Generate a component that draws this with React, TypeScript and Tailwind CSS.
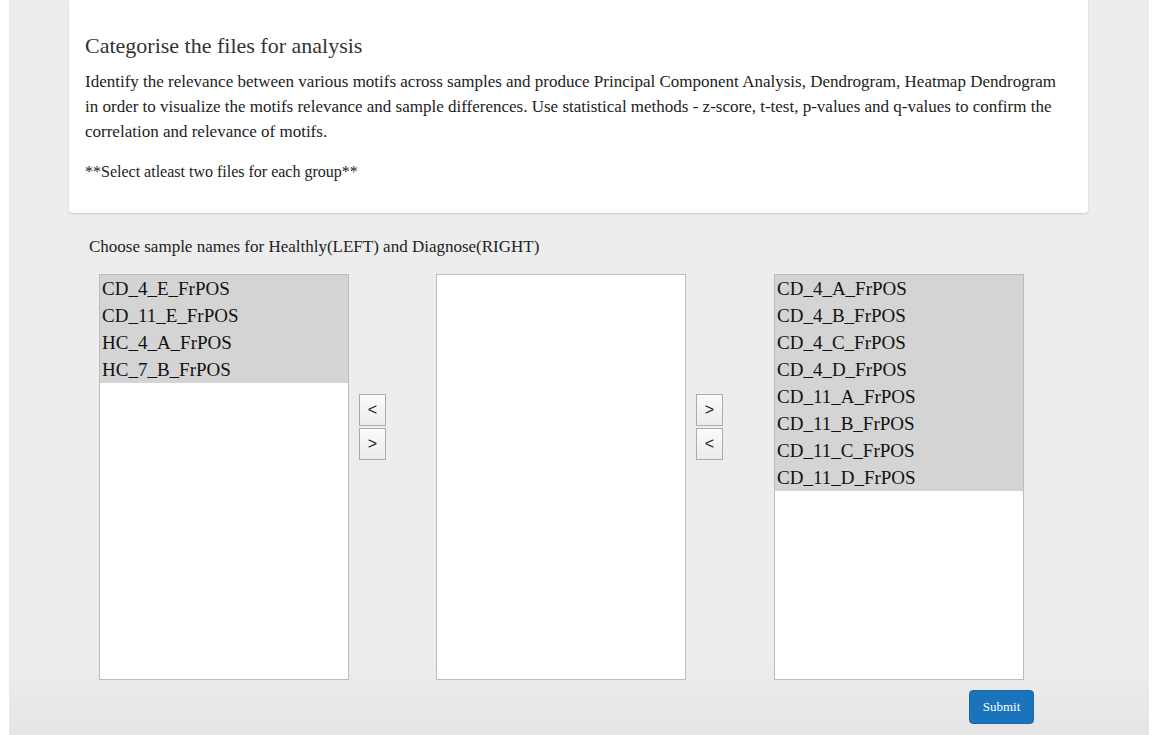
import React from 'react'

const healthy = ['CD_4_E_FrPOS', 'CD_11_E_FrPOS', 'HC_4_A_FrPOS', 'HC_7_B_FrPOS']
const diagnose = [
  'CD_4_A_FrPOS',
  'CD_4_B_FrPOS',
  'CD_4_C_FrPOS',
  'CD_4_D_FrPOS',
  'CD_11_A_FrPOS',
  'CD_11_B_FrPOS',
  'CD_11_C_FrPOS',
  'CD_11_D_FrPOS',
]

const serif = { fontFamily: '"Liberation Serif", "Times New Roman", serif' }

function ListBox({ items }: { items: string[] }) {
  return (
    <div className="w-[250px] h-[406px] bg-white border border-[#bdbdbd] overflow-hidden">
      {items.map((name) => (
        <div key={name} className="h-[27px] bg-[#d4d4d4] pl-[2px] text-[19px] leading-[27px] text-[#111]">
          {name}
        </div>
      ))}
    </div>
  )
}

function MoveButtons({ top, bottom, wide }: { top: string; bottom: string; wide?: boolean }) {
  return (
    <div className={(wide ? 'w-[88px]' : 'w-[87px]') + ' pl-[10px] pt-[120px] flex flex-col gap-[2px]'}>
      {[top, bottom].map((c, i) => (
        <button
          key={i}
          className="w-[27px] h-[32px] border border-[#acacac] bg-gradient-to-b from-[#fafafa] to-[#ececec] text-[16px] text-[#222] leading-none"
          style={{ fontFamily: '"Liberation Sans", Arial, sans-serif' }}
        >
          {c}
        </button>
      ))}
    </div>
  )
}

export default function App() {
  return (
    <div className="w-[1158px] h-[735px] bg-white flex" style={serif}>
      <div className="ml-[9px] w-[1140px] h-[735px] bg-gradient-to-b from-[#ededed] from-90% to-[#e5e5e5] text-[#333]">
        <div className="mx-[60px] w-[1019px] bg-white rounded-b-[4px] shadow-[0_1px_2px_rgba(0,0,0,0.15)] pt-[31px] pb-[29px] pl-[16px] pr-[16px]">
          <h2 className="text-[22px] leading-[30px] text-[#333]">Categorise the files for analysis</h2>
          <p className="mt-[8px] text-[17px] leading-[25px] text-[#222]">
            Identify the relevance between various motifs across samples and produce Principal Component Analysis, Dendrogram, Heatmap Dendrogram in order to visualize the motifs relevance and sample differences. Use statistical methods - z-score, t-test, p-values and q-values to confirm the correlation and relevance of motifs.
          </p>
          <p className="mt-[15px] text-[16px] leading-[25px] text-[#222]">**Select atleast two files for each group**</p>
        </div>
        <div className="pl-[80px] pt-[24px] text-[17px] leading-[20px] text-[#222]">
          Choose sample names for Healthly(LEFT) and Diagnose(RIGHT)
        </div>
        <div className="flex pl-[90px] pt-[17px]">
          <ListBox items={healthy} />
          <MoveButtons top="<" bottom=">" />
          <ListBox items={[]} />
          <MoveButtons top=">" bottom="<" wide />
          <ListBox items={diagnose} />
        </div>
        <div className="flex pl-[960px] pt-[10px]">
          <button className="w-[65px] h-[34px] rounded-[4px] bg-[#1b74bb] border border-[#1a68a8] text-white text-[13px]">
            Submit
          </button>
        </div>
      </div>
    </div>
  )
}
